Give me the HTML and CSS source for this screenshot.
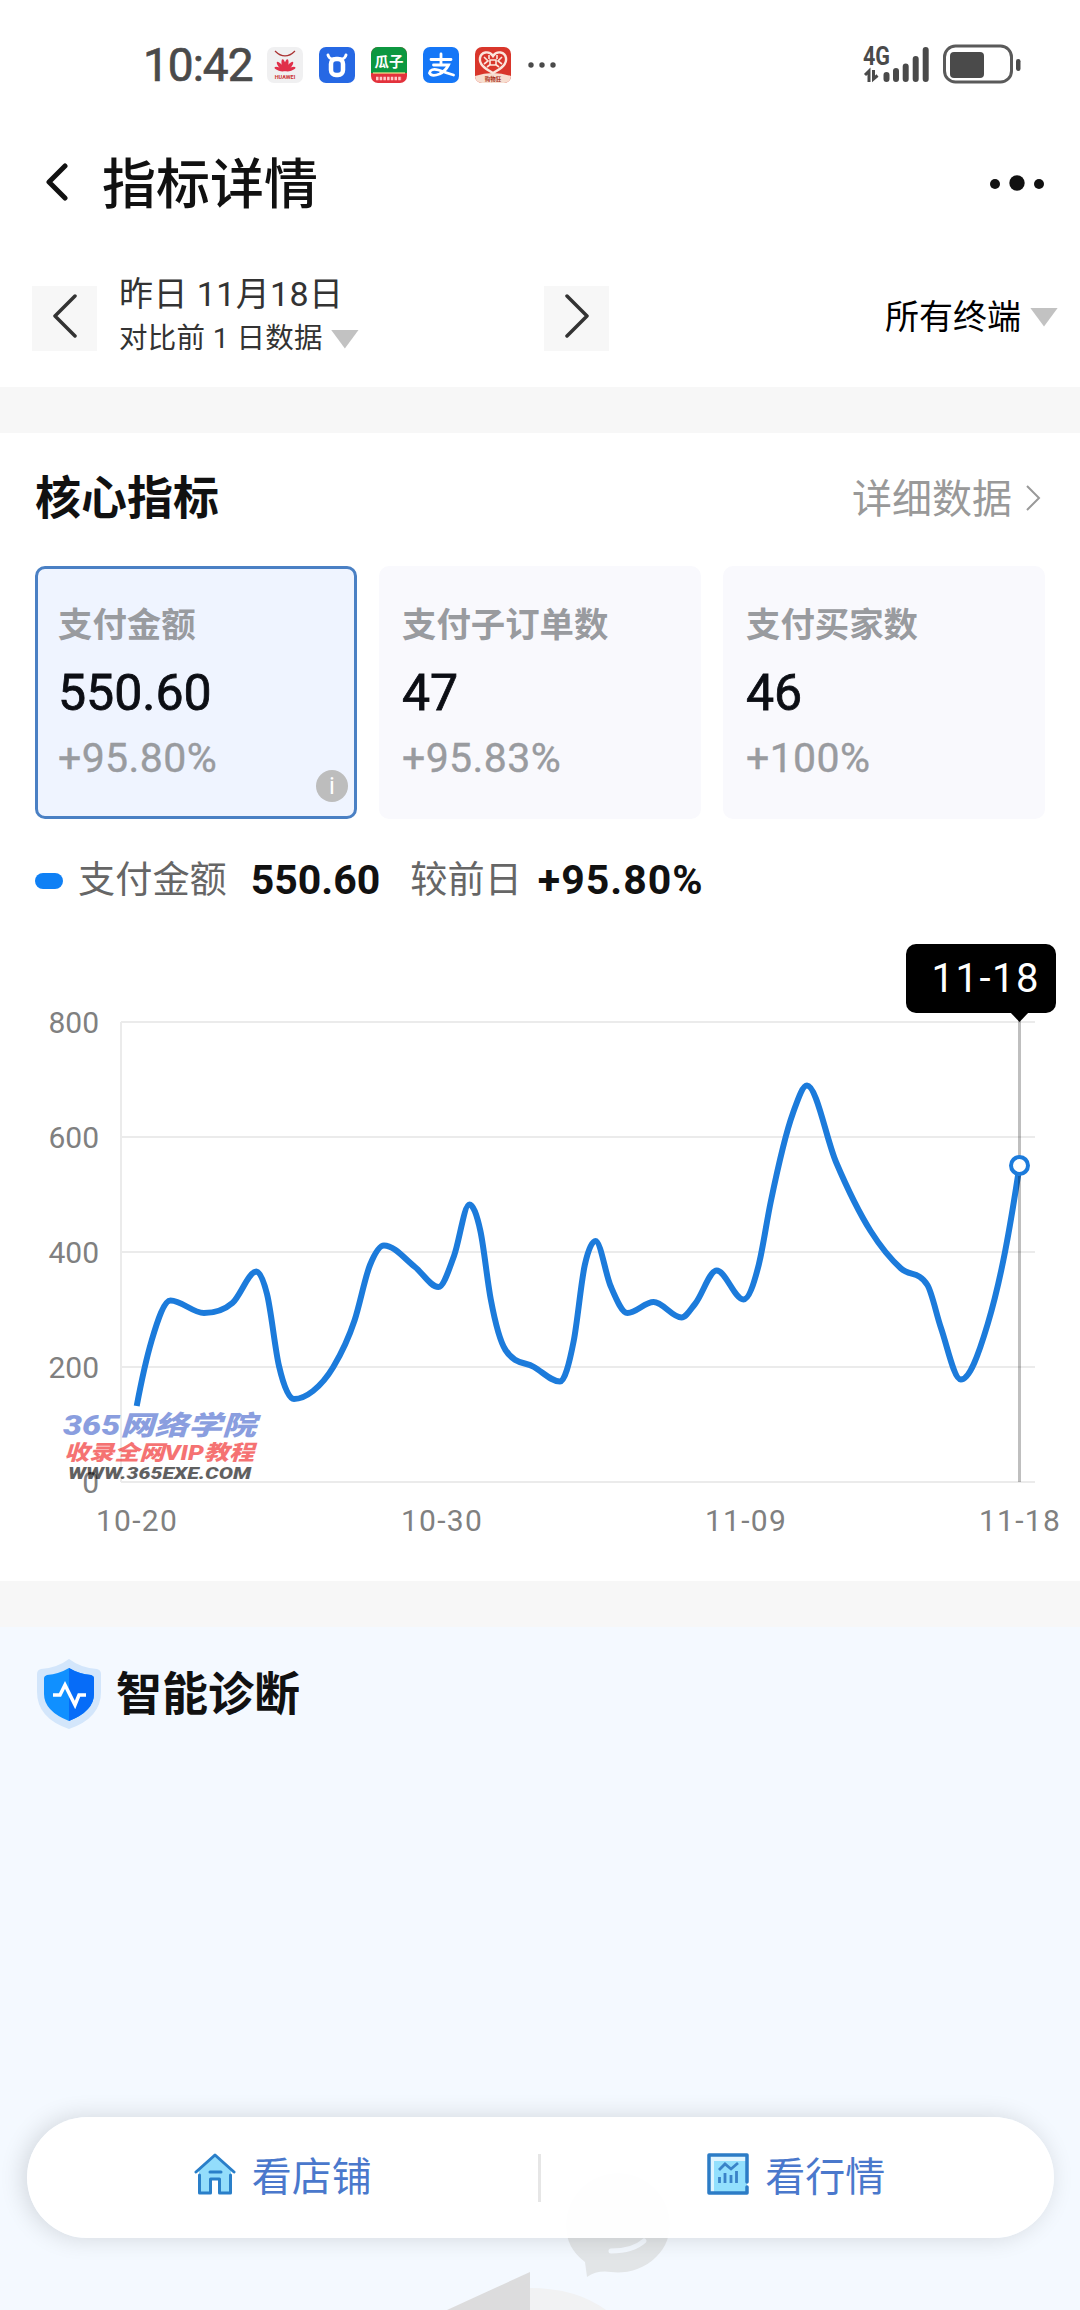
FILE: index.html
```html
<!DOCTYPE html>
<html lang="zh-CN">
<head>
    <meta charset="UTF-8">
    <meta name="viewport" content="width=device-width, initial-scale=1.0">
    <title>指标详情</title>
    <link rel="stylesheet" href="styles.css">
</head>
<body>
    <div class="status-bar">
        <div class="status-left">
            <span class="time">10:42</span>
            <svg class="app-icon" viewBox="0 0 36 36">
                <rect width="36" height="36" rx="7" fill="#f0f0f1"/>
                <path d="M8 4q10 10 20 0" fill="none" stroke="#a33" stroke-width="1.2"/>
                <g fill="#e0304a">
                    <ellipse cx="18" cy="18" rx="2" ry="6" transform="rotate(-12 18 24)"/>
                    <ellipse cx="18" cy="18" rx="2" ry="6" transform="rotate(12 18 24)"/>
                    <ellipse cx="18" cy="18" rx="2" ry="6" transform="rotate(-42 18 24)"/>
                    <ellipse cx="18" cy="18" rx="2" ry="6" transform="rotate(42 18 24)"/>
                    <ellipse cx="18" cy="18" rx="1.6" ry="5" transform="rotate(-72 18 24)"/>
                    <ellipse cx="18" cy="18" rx="1.6" ry="5" transform="rotate(72 18 24)"/>
                </g>
                <text x="18" y="32" text-anchor="middle" font-size="5.5" font-weight="700" fill="#c33">HUAWEI</text>
            </svg>
            <svg class="app-icon" viewBox="0 0 36 36">
                <rect width="36" height="36" rx="7" fill="#2668e4"/>
                <path d="M9 8q1 4 5 4h8q4 0 5-4" fill="none" stroke="#fff" stroke-width="3" stroke-linecap="round"/>
                <rect x="12" y="12" width="12" height="16" rx="5" fill="none" stroke="#fff" stroke-width="4.5"/>
            </svg>
            <svg class="app-icon" viewBox="0 0 36 36">
                <rect width="36" height="36" rx="7" fill="#e3323c"/>
                <path d="M0 26V7a7 7 0 0 1 7-7h22a7 7 0 0 1 7 7v19z" fill="#0d9740"/>
                <path d="M2 26h32" stroke="#f5e58a" stroke-width="1.2"/>
                <text x="18" y="19.5" text-anchor="middle" font-size="14.5" font-weight="700" fill="#fff">瓜子</text>
                <path d="M5 31.500h26" stroke="#ffc9c9" stroke-width="3.500" stroke-dasharray="2.500 1.200"/>
            </svg>
            <svg class="app-icon" viewBox="0 0 36 36">
                <rect width="36" height="36" rx="7" fill="#1577f7"/>
                <path d="M8 12.500h20M18 7v11M10.500 18h15q-3 6-9 9-8 3-10-1 1-5 9-3 8 3 15 5" fill="none" stroke="#fff" stroke-width="2.800" stroke-linecap="round"/>
            </svg>
            <svg class="app-icon" viewBox="0 0 36 36">
                <rect width="36" height="36" rx="7" fill="#d9362b"/>
                <path d="M0 29q18-6 36 0a7 7 0 0 1-7 7H7a7 7 0 0 1-7-7z" fill="#f7ded0"/>
                <path d="M18 26C9 21 4 17 5 11s9-8 13-2c4-6 12-4 13 2s-4 10-13 15z" fill="none" stroke="#fbe6dc" stroke-width="2.400"/>
                <path d="M9 10l4 4-4 3M27 10l-4 4 4 3M14 8v4M22 8v4M12 20l4-3M24 20l-4-3M15 13h6v5h-6z" fill="none" stroke="#fbe6dc" stroke-width="1.600"/>
                <text x="18" y="33.500" text-anchor="middle" font-size="5.500" font-weight="700" fill="#a32">购物狂</text>
            </svg>
            <svg class="status-more" viewBox="0 0 28 8">
                <g fill="#4a4a4a"><circle cx="3" cy="4" r="2.700"/><circle cx="14" cy="4" r="2.700"/><circle cx="25" cy="4" r="2.700"/></g>
            </svg>
        </div>
        <svg class="signal" viewBox="0 0 160 42">
            <text class="net" x="0" y="20.500" textLength="27" lengthAdjust="spacingAndGlyphs">4G</text>
            <path d="M2 31l4-4v11M10.500 26v9l4-3.500" fill="none" stroke="#4a4a4a" stroke-width="3"/>
            <g stroke="#4a4a4a" stroke-width="6" stroke-linecap="round">
                <path d="M23.500 31v4M33 27v8M42.700 22.500v12.500M52.700 15v20M62.700 6v29"/>
            </g>
            <rect x="81.500" y="2" width="67" height="36" rx="11" fill="none" stroke="#5a5a5a" stroke-width="3"/>
            <rect x="87" y="8" width="34" height="26" rx="4" fill="#4a4a4a"/>
            <rect x="153" y="15" width="4.500" height="12" rx="2.200" fill="#4a4a4a"/>
        </svg>
    </div>

    <div class="title-bar">
        <svg class="back" viewBox="0 0 24 38"><path d="M20 3L4 19l16 16" fill="none" stroke="#111" stroke-width="5" stroke-linecap="round" stroke-linejoin="round"/></svg>
        <h1>指标详情</h1>
        <svg class="more" viewBox="0 0 54 16">
            <g fill="#111"><circle cx="5" cy="9" r="5"/><circle cx="27" cy="8" r="7.700"/><circle cx="49" cy="9" r="5"/></g>
        </svg>
    </div>

    <div class="filter-bar">
        <button class="step">
            <svg viewBox="0 0 26 44"><path d="M23 2L3 22l20 20" /></svg>
        </button>
        <div class="date">
            <div class="date-main">昨日 11月18日</div>
            <div class="date-sub">对比前 1 日数据 <i class="caret"></i></div>
        </div>
        <button class="step">
            <svg viewBox="0 0 26 44"><path d="M3 2l20 20L3 42" /></svg>
        </button>
        <div class="terminal">所有终端 <i class="caret"></i></div>
    </div>

    <div class="divider"></div>

    <section class="core">
        <div class="section-head">
            <h2>核心指标</h2>
            <a class="detail">详细数据
                <svg viewBox="0 0 16 28"><path d="M2 2l12 12L2 26" fill="none" stroke="#999" stroke-width="2"/></svg>
            </a>
        </div>

        <div class="cards">
            <div class="card active">
                <div class="label">支付金额</div>
                <div class="value">550.60</div>
                <div class="delta">+95.80%</div>
                <span class="info">i</span>
            </div>
            <div class="card">
                <div class="label">支付子订单数</div>
                <div class="value">47</div>
                <div class="delta">+95.83%</div>
            </div>
            <div class="card">
                <div class="label">支付买家数</div>
                <div class="value">46</div>
                <div class="delta">+100%</div>
            </div>
        </div>

        <div class="legend">
            <i class="pill"></i>
            <span class="legend-name">支付金额</span>
            <b class="legend-total">550.60</b>
            <span class="legend-cmp">较前日</span>
            <b class="legend-delta">+95.80%</b>
        </div>

        <svg class="chart" viewBox="0 920 1080 660">
            <g class="grid">
                <path d="M121 1022H1035M121 1137H1035M121 1252H1035M121 1367H1035M121 1482H1035M121 1022V1482"/>
            </g>
            <g class="axis" text-anchor="end">
                <text x="99" y="1033">800</text>
                <text x="99" y="1148">600</text>
                <text x="99" y="1263">400</text>
                <text x="99" y="1378">200</text>
                <text x="99" y="1493">0</text>
            </g>
            <g class="axis dates" text-anchor="middle">
                <text x="137" y="1531">10-20</text>
                <text x="442" y="1531">10-30</text>
                <text x="746" y="1531">11-09</text>
                <text x="1020" y="1531">11-18</text>
            </g>
            <path id="line" class="line"/>
            <path d="M1019.500 1020V1482" stroke="#000" stroke-opacity=".25" stroke-width="3"/>
            <circle cx="1019.500" cy="1165.500" r="8.500" fill="#fff" stroke="#1c7bdb" stroke-width="4"/>
            <rect x="906" y="944" width="150" height="69" rx="10"/>
            <path d="M1010 1012h19l-9.500 10z"/>
            <text class="tip" x="985" y="992" text-anchor="middle" textLength="107">11-18</text>
            <g class="mark">
                <text x="63" y="1435" font-size="27" fill="#4463cc" textLength="193" lengthAdjust="spacingAndGlyphs">365网络学院</text>
                <text x="64" y="1460" font-size="21" fill="#f01c1c" textLength="190" lengthAdjust="spacingAndGlyphs">收录全网VIP教程</text>
                <text x="68" y="1479" font-size="16" fill="#000" textLength="183" lengthAdjust="spacingAndGlyphs">WWW.365EXE.COM</text>
            </g>
        </svg>
    </section>

    <div class="divider"></div>

    <section class="diagnosis">
        <div class="diagnosis-head">
            <svg class="shield" viewBox="0 0 64 70">
                <path d="M32 0q12 9 28 10 4 1 4 5v18q0 26-32 37Q0 59 0 33V15q0-4 4-5Q20 9 32 0z" fill="#d3e6fb"/>
                <path d="M32 9q10 6 22 7 3 1 3 3v16q0 17-25 27Q7 52 7 35V19q0-2 3-3 12-1 22-7z" fill="#1090ff"/>
                <path d="M32 9q10 6 22 7 3 1 3 3v16q0 17-25 27z" fill="#066cf8"/>
                <path d="M16 36h7l5-10 10 20 4-10h7" fill="none" stroke="#fff" stroke-width="3.500"/>
            </svg>
            <h2>智能诊断</h2>
        </div>

        <svg class="backdrop" viewBox="440 2160 240 150">
            <path d="M566 2225a52 52 0 1 1 104 0a52 48 0 0 1-59 47q-14-2-24 5l-2-15q-19-14-19-37z" fill="#e2e5e7"/>
            <path d="M611 2251q22 0 33-10" fill="none" stroke="#f4f9ff" stroke-width="5" stroke-linecap="round"/>
            <path d="M447 2310l83-38v38z" fill="#dcdcdd"/>
            <path d="M530 2288q46 0 76 22h-76z" fill="#f1f2f3"/>
        </svg>

        <nav class="bottom-nav">
            <a>
                <svg viewBox="0 0 42 42">
                    <path d="M21 2L5 16v24h11V26h10v14h11V16z" fill="#93ddfb"/>
                    <g fill="none" stroke="#2a7fc9" stroke-width="3" stroke-linecap="round" stroke-linejoin="round">
                        <path d="M2 19L21 2l19 17"/>
                        <path d="M5.500 22v18h11V26h9v14h11V22M16 19h11"/>
                    </g>
                </svg>
                看店铺
            </a>
            <a>
                <svg viewBox="0 0 42 42">
                    <path d="M2 2h38v38H2z" fill="#dff5ff"/>
                    <path d="M7 8h33v32H7z" fill="#93e0fd"/>
                    <path d="M40 29V2H2v38h38v-6" fill="none" stroke="#2c7cc6" stroke-width="3.500" stroke-linecap="round" stroke-linejoin="round"/>
                    <path d="M12 17l6-6 6 5 7-6M12.500 24v6M18 20v10M24 22v8M29.500 18v12" fill="none" stroke="#3a83c8" stroke-width="2.800"/>
                </svg>
                看行情
            </a>
        </nav>
    </section>

    <script>
        // [x, y] knots of the trend line
        const points = [
            [136.7, 1406], [151.5, 1341], [170.5, 1300.5], [204, 1313], [232.4, 1303],
            [256.5, 1271.5], [267, 1294], [279, 1366], [294, 1399], [313, 1391], [333.3, 1367],
            [354.7, 1320], [370, 1265], [384, 1245.5], [415, 1267], [438.4, 1287], [454, 1256],
            [469.4, 1204.5], [480.4, 1231], [490.7, 1299], [505.5, 1350], [534, 1367], [560, 1381.5],
            [573.7, 1341], [584.8, 1265], [595.5, 1241], [610.6, 1286], [627.5, 1313], [653.6, 1302],
            [681.5, 1317.5], [695, 1304], [716.7, 1270.5], [743.5, 1299.5], [758.7, 1265],
            [770.7, 1202], [793, 1113], [807, 1085.5], [836, 1162], [870.6, 1231], [901, 1268.5],
            [927.4, 1285], [941, 1328], [960.8, 1379.5], [987.7, 1324], [1005, 1252], [1019.5, 1166]
        ];

        // Flat at the peaks, otherwise the weighted slope of the two neighbours,
        // capped so the curve never overshoots
        const n = points.length;
        const h = [];
        const d = [];
        for (let i = 0; i < n - 1; i++) {
            h.push(points[i + 1][0] - points[i][0]);
            d.push((points[i + 1][1] - points[i][1]) / h[i]);
        }
        const m = [d[0] * 1.2];
        for (let i = 1; i < n - 1; i++) {
            if (d[i - 1] * d[i] <= 0) {
                m.push(0);
            } else {
                const slope = (d[i - 1] * h[i] + d[i] * h[i - 1]) / (h[i - 1] + h[i]);
                const cap = 2.6 * Math.min(Math.abs(d[i - 1]), Math.abs(d[i]));
                m.push(Math.sign(slope) * Math.min(Math.abs(slope), cap));
            }
        }
        m.push(d[n - 2] * 1.1);

        let path = `M${points[0]}`;
        for (let i = 0; i < n - 1; i++) {
            const [x0, y0] = points[i];
            const [x1, y1] = points[i + 1];
            const t = h[i] / 3;
            path += `C${x0 + t},${y0 + m[i] * t} ${x1 - t},${y1 - m[i + 1] * t} ${x1},${y1}`;
        }
        document.getElementById('line').setAttribute('d', path);
    </script>
</body>
</html>
```
FILE: styles.css
```css
* {
    margin: 0;
    padding: 0;
    box-sizing: border-box;
}

body {
    width: 1080px;
    height: 2310px;
    overflow: hidden;
    display: flex;
    flex-direction: column;
    font-family: Roboto, "Noto Sans CJK SC", sans-serif;
    background-color: #fff;
    color: #111;
}

svg {
    display: block;
    flex-shrink: 0;
}

.status-bar {
    height: 130px;
    padding: 0 57px 0 143px;
    display: flex;
    align-items: center;
    justify-content: space-between;
}

.status-left {
    display: flex;
    align-items: center;
    gap: 16px;
}

.time {
    width: 108px;
    font-size: 46px;
    line-height: 56px;
    letter-spacing: -1px;
    color: #4a4a4a;
    -webkit-text-stroke: 0.7px #4a4a4a;
    white-space: nowrap;
}

.app-icon {
    width: 36px;
    height: 36px;
}

.status-more {
    width: 28px;
    height: 8px;
    margin-left: 1px;
}

.signal {
    width: 160px;
    height: 42px;
    overflow: visible;
}

.net {
    font-size: 25px;
    font-weight: 700;
    fill: #4a4a4a;
}

.title-bar {
    height: 108px;
    padding: 0 36px 0 45px;
    display: flex;
    align-items: center;
}

.back {
    width: 24px;
    height: 38px;
    margin-bottom: 4px;
}

h1 {
    margin-left: 33px;
    padding-top: 3px;
    font-size: 54px;
    line-height: 80px;
    font-weight: 500;
}

.more {
    width: 54px;
    height: 16px;
    margin-left: auto;
    margin-bottom: 3px;
}

.filter-bar {
    height: 149px;
    padding: 32px 22px 0 32px;
    display: flex;
    align-items: flex-start;
}

.step {
    width: 65px;
    height: 65px;
    margin-top: 16px;
    padding-bottom: 5px;
    display: flex;
    align-items: center;
    justify-content: center;
    border: none;
    background-color: #f7f7f7;
}

.step svg {
    width: 26px;
    height: 44px;
    fill: none;
    stroke: #333;
    stroke-width: 3.5;
    stroke-linecap: round;
    stroke-linejoin: round;
}

.date {
    width: 447px;
    padding: 1px 0 0 22px;
    color: #333;
}

.date-main {
    font-size: 34px;
    line-height: 46px;
    letter-spacing: 0.4px;
}

.date-sub {
    display: flex;
    align-items: center;
    gap: 8px;
    font-size: 28.5px;
    line-height: 44px;
    letter-spacing: 0.3px;
}

.caret {
    width: 28px;
    height: 19px;
    background-color: #c2c2c2;
    clip-path: polygon(0 0, 100% 0, 50% 100%);
}

.terminal {
    margin-left: auto;
    margin-top: 22px;
    display: flex;
    align-items: center;
    gap: 9px;
    font-size: 34px;
    line-height: 50px;
    color: #000;
}

.divider {
    height: 46px;
    flex-shrink: 0;
    background-color: #f7f7f7;
}

.core {
    height: 1148px;
    flex-shrink: 0;
}

.section-head {
    height: 133px;
    padding: 0 39px 4px 35px;
    display: flex;
    align-items: center;
    justify-content: space-between;
}

h2 {
    font-size: 46px;
    line-height: 68px;
    font-weight: 700;
}

.detail {
    padding-bottom: 3px;
    display: flex;
    align-items: center;
    gap: 13px;
    font-size: 40px;
    color: #999;
}

.detail svg {
    width: 16px;
    height: 28px;
    margin-top: 3px;
}

.cards {
    margin: 0 35px;
    display: grid;
    grid-template-columns: repeat(3, 1fr);
    gap: 22px;
}

.card {
    position: relative;
    height: 253px;
    padding: 31px 20px 0;
    border: 3px solid transparent;
    border-radius: 10px;
    background-color: #f9f9fd;
    background-clip: border-box;
}

.card.active {
    border-color: #4a80c4;
    background-color: #eff4ff;
}

.label {
    font-size: 34.4px;
    line-height: 50px;
    font-weight: 700;
    color: #999b9f;
}

.value {
    margin-top: 13px;
    font-size: 50px;
    line-height: 60px;
    font-weight: 400;
    color: #0c0e14;
    -webkit-text-stroke: 0.8px #0c0e14;
}

.delta {
    margin-top: 10px;
    font-size: 41px;
    line-height: 50px;
    letter-spacing: 0.4px;
    color: #999b9f;
    -webkit-text-stroke: 0.4px #999b9f;
}

.info {
    position: absolute;
    right: 6px;
    bottom: 14px;
    width: 32px;
    height: 32px;
    border-radius: 50%;
    background-color: #bdbdbd;
    color: #fff;
    font-size: 24px;
    line-height: 32px;
    text-align: center;
}

.legend {
    height: 101px;
    padding: 19px 35px 0;
    display: flex;
    align-items: flex-start;
    font-size: 41px;
    line-height: 84px;
}

.pill {
    width: 28px;
    height: 16px;
    margin: 35px 15px 0 0;
    border-radius: 8px;
    background-color: #0f80f5;
}

.legend-name, .legend-cmp {
    font-size: 37.2px;
    color: #666;
}

.legend-total {
    margin: 0 30px 0 24px;
}

.legend-cmp {
    margin-right: 16px;
}

.legend-delta {
    letter-spacing: 1px;
}

.chart {
    width: 1080px;
    height: 660px;
}

.grid {
    fill: none;
    stroke: #ebebeb;
    stroke-width: 2;
}

.axis {
    font-size: 30px;
    fill: #808080;
}

.dates {
    letter-spacing: 1.3px;
}

.line {
    fill: none;
    stroke: #1c7bdb;
    stroke-width: 6;
}

.tip {
    font-size: 40px;
    fill: #fff;
}

.mark {
    font-weight: 900;
    font-style: italic;
    opacity: 0.62;
}

.diagnosis {
    position: relative;
    flex: 1;
    padding-top: 32px;
    background-color: #f4f9ff;
}

.diagnosis-head {
    padding-left: 37px;
    display: flex;
    align-items: center;
    gap: 15px;
}

.shield {
    width: 64px;
    height: 70px;
}

.backdrop {
    position: absolute;
    left: 440px;
    bottom: 0;
    width: 240px;
    height: 150px;
}

/* floats over the page content */
.bottom-nav {
    position: absolute;
    left: 27px;
    right: 26px;
    bottom: 72px;
    height: 121px;
    display: grid;
    grid-template-columns: 1fr 1fr;
    border-radius: 61px;
    background-color: rgba(255, 255, 255, 0.96);
    box-shadow: -4px 0 24px rgba(0, 0, 0, 0.14);
}

.bottom-nav a {
    display: flex;
    align-items: center;
    justify-content: center;
    gap: 16px;
    padding: 0 2px 7px 0;
    font-size: 40px;
    color: #4a78cc;
}

.bottom-nav a:first-child {
    background: linear-gradient(#e6e6e6, #e6e6e6) no-repeat 100% 50% / 3px 48px;
}

.bottom-nav svg {
    width: 42px;
    height: 42px;
}
```
